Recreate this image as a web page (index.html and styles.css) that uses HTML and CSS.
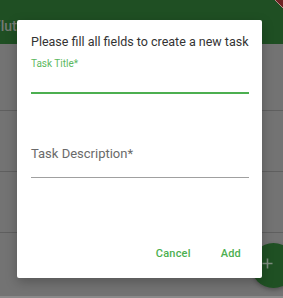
FILE: index.html
```html
<!DOCTYPE html>
<html>
<head>
<meta charset="utf-8">
<link rel="stylesheet" href="styles.css">
</head>
<body>
<div class="app">
  <header class="appbar">
    <span class="appbar-title">Flutter Demo Home Page</span>
  </header>
  <ul class="list">
    <li class="row row-first"></li>
    <li class="row"></li>
    <li class="row"></li>
    <li class="row row-last"></li>
  </ul>
  <div class="bottom-strip"></div>

  <svg class="debug-banner" width="10" height="10" viewBox="0 0 10 10">
    <polygon points="2,0 10,0 10,8" fill="#6e2424"/>
    <polyline points="2,0 10,8" stroke="#b98a8a" stroke-width="1" fill="none"/>
  </svg>

  <div class="fab">
    <svg width="11" height="11" viewBox="0 0 11 11">
      <path d="M5.5 0.5V10.5M0.5 5.5H10.5" stroke="#7d8d7e" stroke-width="1.6" fill="none"/>
    </svg>
  </div>

  <div class="dialog">
    <h2 class="dialog-title">Please fill all fields to create a new task</h2>
    <div class="field field-focused">
      <label class="field-label">Task Title*</label>
      <div class="field-line"></div>
    </div>
    <div class="field field-idle">
      <label class="field-placeholder">Task Description*</label>
      <div class="field-line"></div>
    </div>
    <div class="actions">
      <button class="btn">Cancel</button>
      <button class="btn">Add</button>
    </div>
  </div>
</div>
</body>
</html>
```
FILE: styles.css
```css
* { box-sizing: border-box; }
html, body { margin: 0; padding: 0; }
body {
  font-family: Roboto, "Liberation Sans", sans-serif;
  width: 283px;
  height: 298px;
  overflow: hidden;
}
.app {
  position: relative;
  width: 283px;
  height: 298px;
  background: #737373;
  display: flex;
  flex-direction: column;
  overflow: hidden;
}
.appbar {
  height: 44px;
  flex: none;
  background: #1f4f23;
  display: flex;
  align-items: flex-start;
  padding-top: 18px;
  white-space: nowrap;
  overflow: hidden;
}
.appbar-title {
  margin-left: -7px;
  font-size: 14px;
  font-weight: 500;
  color: #757a75;
  line-height: 16px;
}
.list {
  list-style: none;
  margin: 0;
  padding: 0;
  flex: 1;
  display: flex;
  flex-direction: column;
}
.row {
  height: 61px;
  border-bottom: 1px solid #5f5f5f;
  flex: none;
}
.row-first { height: 67px; }
.row-last { border-bottom: none; flex: 1; }
.bottom-strip {
  height: 2px;
  flex: none;
  background: #8a8a8a;
}
.debug-banner {
  position: absolute;
  top: 0;
  right: 0;
}
.fab {
  position: absolute;
  left: 251px;
  top: 243px;
  width: 45px;
  height: 45px;
  border-radius: 50%;
  background: #1f5023;
  box-shadow: 0 2px 4px rgba(0,0,0,0.3);
  display: flex;
  align-items: flex-start;
  padding-left: 11px;
  padding-top: 15px;
}
.dialog {
  position: absolute;
  left: 17px;
  top: 20px;
  width: 245px;
  height: 258px;
  background: #fff;
  border-radius: 2px;
  box-shadow: 0 4px 12px rgba(0,0,0,0.25);
  padding: 14px 13px 0 14px;
  display: flex;
  flex-direction: column;
}
.dialog-title {
  margin: 0;
  font-size: 12.5px;
  font-weight: 400;
  color: #333;
  line-height: 16px;
  white-space: nowrap;
}
.field {
  display: flex;
  flex-direction: column;
}
.field-focused {
  margin-top: 8px;
}
.field-label {
  font-size: 10px;
  line-height: 12px;
  color: #5cb860;
}
.field-focused .field-line {
  margin-top: 22px;
  height: 2px;
  background: #4caf50;
}
.field-idle {
  margin-top: 52px;
}
.field-placeholder {
  font-size: 13px;
  line-height: 16px;
  color: #6a6a6a;
}
.field-idle .field-line {
  margin-top: 15px;
  height: 1px;
  background: #a0a0a0;
}
.actions {
  margin-top: auto;
  margin-bottom: 17px;
  display: flex;
  justify-content: flex-end;
  gap: 30px;
  padding-right: 8px;
}
.btn {
  border: none;
  background: none;
  padding: 0;
  font-family: Roboto, "Liberation Sans", sans-serif;
  font-size: 11px;
  font-weight: 500;
  color: #4caf50;
  line-height: 14px;
  letter-spacing: 0.2px;
}
```
